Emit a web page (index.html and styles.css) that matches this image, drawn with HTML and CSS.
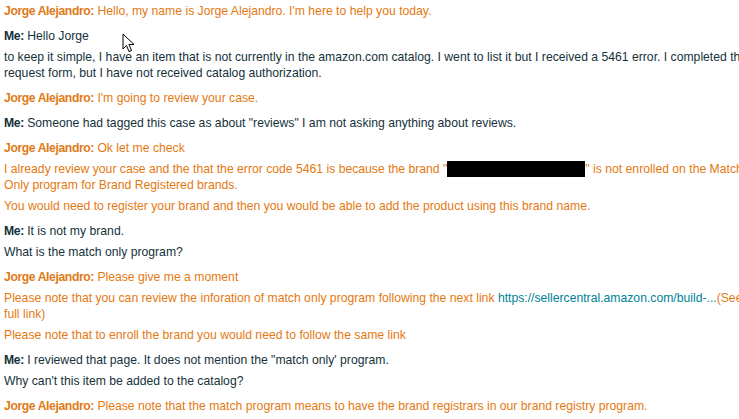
FILE: index.html
```html
<!DOCTYPE html>
<html lang="en">

<head>
    <meta charset="UTF-8">
    <meta name="viewport" content="width=device-width, initial-scale=1.0">
    <title>Chat transcript</title>
    <link rel="stylesheet" href="styles.css">
</head>

<body>
    <div class="transcript">
        <div class="msg agent">
            <p><b>Jorge Alejandro:</b> Hello, my name is Jorge Alejandro. I'm here to help you today.</p>
        </div>
        <div class="msg me">
            <p><b>Me:</b> Hello Jorge</p>
            <p>to keep it simple, I have an item that is not currently in the amazon.com catalog. I went to list it but I received a 5461 error. I completed the request form, but I have not received catalog authorization.</p>
        </div>
        <div class="msg agent">
            <p><b>Jorge Alejandro:</b> I'm going to review your case.</p>
        </div>
        <div class="msg me">
            <p><b>Me:</b> Someone had tagged this case as about "reviews" I am not asking anything about reviews.</p>
        </div>
        <div class="msg agent">
            <p><b>Jorge Alejandro:</b> Ok let me check</p>
            <p>I already review your case and the that the error code 5461 is because the brand "<span class="redacted"></span>" is not enrolled on the Match Only program for Brand Registered brands.</p>
            <p>You would need to register your brand and then you would be able to add the product using this brand name.</p>
        </div>
        <div class="msg me">
            <p><b>Me:</b> It is not my brand.</p>
            <p>What is the match only program?</p>
        </div>
        <div class="msg agent">
            <p><b>Jorge Alejandro:</b> Please give me a moment</p>
            <p>Please note that you can review the inforation of match only program following the next link <a href="#">https://sellercentral.amazon.com/build-...</a>(See full link)</p>
            <p>Please note that to enroll the brand you would need to follow the same link</p>
        </div>
        <div class="msg me">
            <p><b>Me:</b> I reviewed that page. It does not mention the "match only' program.</p>
            <p>Why can't this item be added to the catalog?</p>
        </div>
        <div class="msg agent">
            <p><b>Jorge Alejandro:</b> Please note that the match program means to have the brand registrars in our brand registry program.</p>
        </div>
    </div>

    <!-- mouse pointer captured in the screenshot -->
    <svg class="cursor" width="14" height="20" viewBox="0 0 14 20">
        <path d="M1 1 L1 16 L4.5 12.5 L7 18.5 L9.5 17.5 L7 11.5 L12 11.5 Z" fill="#fff" stroke="#000" stroke-width="1" stroke-linejoin="round" />
    </svg>
</body>

</html>
```

FILE: styles.css
```css
* {
    margin: 0;
    padding: 0;
}

html,
body {
    width: 739px;
    height: 419px;
    overflow: hidden;
    background: #fff;
}

body {
    font-family: "Liberation Sans", Arial, sans-serif;
    font-size: 12.2px;
    line-height: 16px;
    position: relative;
}

.transcript {
    width: 756px;
    padding: 3px 0 0 4px;
}

.msg {
    padding-bottom: 4px;
}

.msg p {
    margin-bottom: 5px;
}

.agent {
    color: #e47911;
}

.me {
    color: #15313b;
}

.msg b {
    font-weight: bold;
    letter-spacing: -0.4px;
}

.agent b {
    color: #e07a18;
}

.msg a {
    color: #008296;
    text-decoration: none;
}

.redacted {
    display: inline-block;
    width: 138px;
    height: 16px;
    background: #000;
    vertical-align: top;
}

.cursor {
    position: absolute;
    left: 122px;
    top: 33px;
}
```
